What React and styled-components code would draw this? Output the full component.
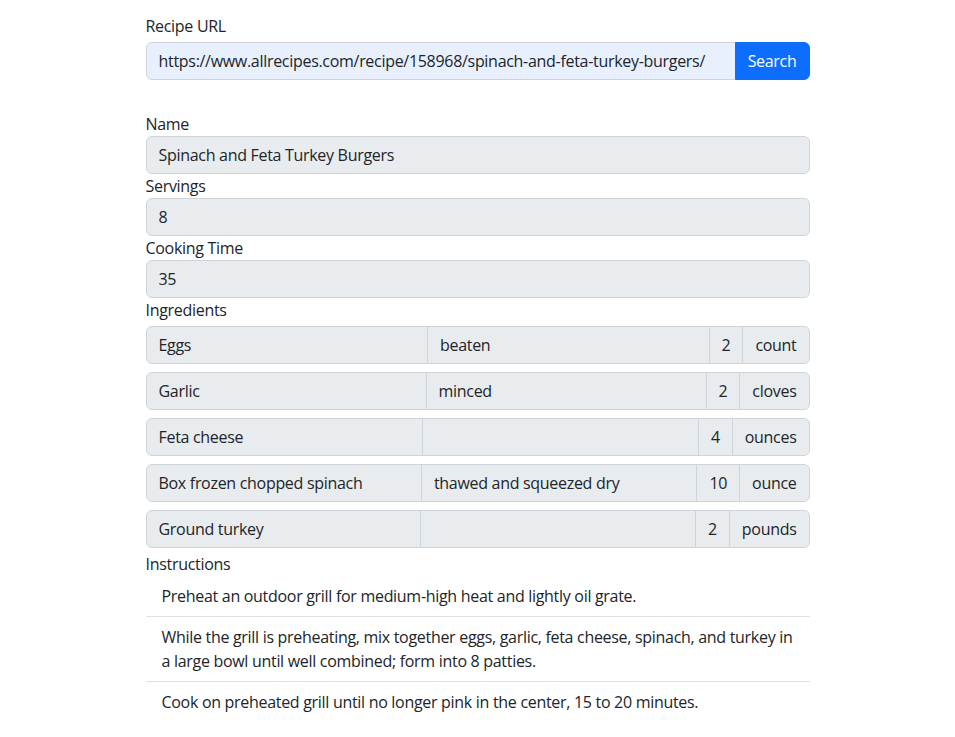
import React from "react";
import styled, { createGlobalStyle } from "styled-components";

const GlobalStyle = createGlobalStyle`
  * { box-sizing: border-box; }
  body {
    margin: 0;
    background: #fff;
    color: #212529;
    font-family: "Open Sans", "Noto Sans", sans-serif;
    font-size: 16px;
    line-height: 24px;
    letter-spacing: -0.3px;
  }
`;

const Container = styled.div`
  width: 664px;
  margin: 0 auto;
  padding-top: 14px;
  display: flex;
  flex-direction: column;
`;

const SearchForm = styled.form`
  display: flex;
  flex-direction: column;
  margin-bottom: 32px;
`;

const Label = styled.label`
  display: block;
  line-height: 24px;
  margin-bottom: ${(p) => p.$gap || 0}px;
`;

const InputGroup = styled.div`
  display: flex;
  align-items: stretch;
  width: 100%;
  margin: ${(p) => p.$margin || "0"};
`;

const Input = styled.input`
  display: block;
  flex: 1 1 auto;
  width: 1%;
  min-width: 0;
  height: 38px;
  padding: 6px 12px;
  font: inherit;
  letter-spacing: inherit;
  color: #212529;
  background: ${(p) => (p.$autofill ? "#e8f0fe" : "#e9ecef")};
  border: 1px solid #ced4da;
  border-radius: 6px;
  outline: none;
  &:not(:first-child) {
    margin-left: -1px;
    border-top-left-radius: 0;
    border-bottom-left-radius: 0;
  }
  &:not(:last-child) {
    border-top-right-radius: 0;
    border-bottom-right-radius: 0;
  }
`;

const Addon = styled.span`
  display: flex;
  align-items: center;
  padding: 6px 12px;
  margin-left: -1px;
  background: #e9ecef;
  border: 1px solid #ced4da;
  white-space: nowrap;
  &:last-child {
    border-top-right-radius: 6px;
    border-bottom-right-radius: 6px;
  }
`;

const SearchButton = styled.button`
  height: 38px;
  padding: 6px 12px;
  font: inherit;
  letter-spacing: inherit;
  color: #fff;
  background: #0d6efd;
  border: 1px solid #0d6efd;
  border-radius: 0 6px 6px 0;
  margin-left: -1px;
  cursor: pointer;
`;

const RecipeForm = styled.div`
  display: flex;
  flex-direction: column;
`;

const List = styled.ul`
  list-style: none;
  margin: 0;
  padding: 0;
`;

const ListItem = styled.li`
  padding: 8px 16px;
  border-bottom: 1px solid #dee2e6;
  &:last-child {
    border-bottom: none;
  }
`;

const ingredients = [
  { name: "Eggs", note: "beaten", qty: "2", unit: "count" },
  { name: "Garlic", note: "minced", qty: "2", unit: "cloves" },
  { name: "Feta cheese", note: "", qty: "4", unit: "ounces" },
  { name: "Box frozen chopped spinach", note: "thawed and squeezed dry", qty: "10", unit: "ounce" },
  { name: "Ground turkey", note: "", qty: "2", unit: "pounds" },
];

const instructions = [
  "Preheat an outdoor grill for medium-high heat and lightly oil grate.",
  "While the grill is preheating, mix together eggs, garlic, feta cheese, spinach, and turkey in a large bowl until well combined; form into 8 patties.",
  "Cook on preheated grill until no longer pink in the center, 15 to 20 minutes.",
];

const App = () => {
  return (
    <>
      <GlobalStyle />
      <Container>
        <SearchForm onSubmit={(e) => e.preventDefault()}>
          <Label $gap={4}>Recipe URL</Label>
          <InputGroup>
            <Input
              $autofill
              defaultValue="https://www.allrecipes.com/recipe/158968/spinach-and-feta-turkey-burgers/"
            />
            <SearchButton type="submit">Search</SearchButton>
          </InputGroup>
        </SearchForm>

        <RecipeForm>
          <Label>Name</Label>
          <InputGroup>
            <Input readOnly value="Spinach and Feta Turkey Burgers" />
          </InputGroup>
          <Label>Servings</Label>
          <InputGroup>
            <Input readOnly value="8" />
          </InputGroup>
          <Label>Cooking Time</Label>
          <InputGroup>
            <Input readOnly value="35" />
          </InputGroup>

          <Label>Ingredients</Label>
          {ingredients.map((ing) => (
            <InputGroup key={ing.name} $margin="4px 0">
              <Input readOnly value={ing.name} />
              <Input readOnly value={ing.note} />
              <Addon>{ing.qty}</Addon>
              <Addon>{ing.unit}</Addon>
            </InputGroup>
          ))}

          <Label>Instructions</Label>
          <List>
            {instructions.map((step) => (
              <ListItem key={step}>{step}</ListItem>
            ))}
          </List>
        </RecipeForm>
      </Container>
    </>
  );
};

export default App;
